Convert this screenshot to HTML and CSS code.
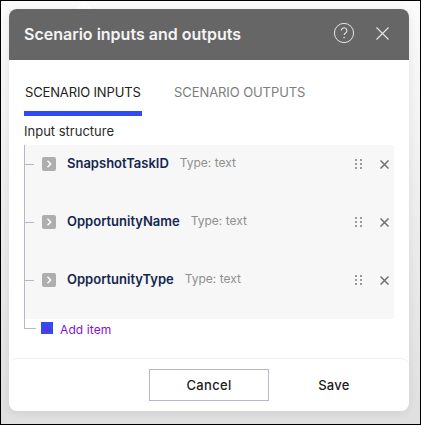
FILE: index.html
```html
<!DOCTYPE html>
<html lang="en">
<head>
<meta charset="utf-8">
<title>Scenario inputs and outputs</title>
<link rel="stylesheet" href="styles.css">
</head>
<body>
<div class="frame">
  <span class="notch"></span>
  <section class="modal">
    <header class="head">
      <h1 class="title">Scenario inputs and outputs</h1>
      <div class="head-icons">
        <svg class="help" viewBox="0 0 22 22" width="22" height="22"><circle cx="11" cy="11" r="9.6" fill="none" stroke="#e6e6e6" stroke-width="1"/><path d="M8.3 8.6a2.8 2.8 0 1 1 4.4 2.3c-1 .7-1.6 1.1-1.6 2.2" fill="none" stroke="#e6e6e6" stroke-width="1.1"/><circle cx="11.1" cy="15.6" r=".8" fill="#e6e6e6"/></svg>
        <svg class="close" viewBox="0 0 13 13" width="13" height="13"><path d="M.5.5l12 12M12.5.5l-12 12" stroke="#e6e6e6" stroke-width="1.1" fill="none"/></svg>
      </div>
    </header>
    <nav class="tabs">
      <span class="tab active">SCENARIO INPUTS</span>
      <span class="tab">SCENARIO OUTPUTS</span>
    </nav>
    <div class="label">Input structure</div>
    <div class="tree">
      <ul class="list">
        <li class="row">
          <svg class="chev" viewBox="0 0 14 14" width="14" height="14"><rect width="14" height="14" rx="2" fill="#aeaeae"/><path d="M5.5 3.8L8.7 7l-3.2 3.2" fill="none" stroke="#fff" stroke-width="1.4"/></svg>
          <span class="name">SnapshotTaskID</span><span class="type">Type: text</span>
          <span class="grip"><i></i><i></i><i></i><i></i><i></i><i></i></span>
          <svg class="del" viewBox="0 0 9 9" width="9" height="9"><path d="M.5.5l8 8M8.5.5l-8 8" stroke="#6f6f6f" stroke-width="1.5" fill="none"/></svg>
        </li>
        <li class="row">
          <svg class="chev" viewBox="0 0 14 14" width="14" height="14"><rect width="14" height="14" rx="2" fill="#aeaeae"/><path d="M5.5 3.8L8.7 7l-3.2 3.2" fill="none" stroke="#fff" stroke-width="1.4"/></svg>
          <span class="name">OpportunityName</span><span class="type">Type: text</span>
          <span class="grip"><i></i><i></i><i></i><i></i><i></i><i></i></span>
          <svg class="del" viewBox="0 0 9 9" width="9" height="9"><path d="M.5.5l8 8M8.5.5l-8 8" stroke="#6f6f6f" stroke-width="1.5" fill="none"/></svg>
        </li>
        <li class="row">
          <svg class="chev" viewBox="0 0 14 14" width="14" height="14"><rect width="14" height="14" rx="2" fill="#aeaeae"/><path d="M5.5 3.8L8.7 7l-3.2 3.2" fill="none" stroke="#fff" stroke-width="1.4"/></svg>
          <span class="name">OpportunityType</span><span class="type">Type: text</span>
          <span class="grip"><i></i><i></i><i></i><i></i><i></i><i></i></span>
          <svg class="del" viewBox="0 0 9 9" width="9" height="9"><path d="M.5.5l8 8M8.5.5l-8 8" stroke="#6f6f6f" stroke-width="1.5" fill="none"/></svg>
        </li>
      </ul>
      <div class="add">
        <svg class="plus" viewBox="0 0 12 12" width="12" height="12"><rect width="12" height="12" fill="#2d4cf5"/><path d="M6 3v9M1.5 8h9" stroke="#a010c0" stroke-width="1" fill="none"/></svg>
        <span>Add item</span>
      </div>
    </div>
    <footer class="foot">
      <button class="btn cancel">Cancel</button>
      <button class="btn save">Save</button>
    </footer>
  </section>
</div>
</body>
</html>
```
FILE: styles.css
```css
* { box-sizing: border-box; }
html, body { margin: 0; padding: 0; }
body { width: 421px; height: 425px; overflow: hidden; font-family: Inter, "Liberation Sans", sans-serif; }
.frame {
  position: relative;
  width: 421px; height: 425px;
  border: 1px solid #000;
  padding: 8px 10px 0 8px;
  background: linear-gradient(180deg, #fbfbfb 0%, #ececec 55%, #e0e0e0 100%);
}
.notch {
  position: absolute; left: 74px; top: 0;
  width: 0; height: 0;
  border-left: 9px solid transparent; border-right: 9px solid transparent;
  border-bottom: 8px solid #fff;
}
.modal {
  position: relative;
  width: 400px; height: 402px;
  background: #fff;
  border-radius: 8px;
  box-shadow: 0 2px 10px rgba(0,0,0,.08);
  display: flex; flex-direction: column;
}
.head {
  height: 51px; flex: none;
  background: #666;
  border-radius: 8px 8px 0 0;
  display: flex; align-items: center; justify-content: space-between;
  padding: 0 20px 0 15px;
}
.title { margin: 0; font-size: 16px; font-weight: 600; color: #f4f4f4; line-height: 50px; height: 51px; }
.head-icons { display: flex; align-items: center; gap: 21px; margin-top: -3px; }
.help, .close { display: block; }
.tabs { display: flex; gap: 32px; margin: 20px 0 0 15px; height: 36px; }
.tab { font-size: 13px; color: #7d7d7d; line-height: 20px; height: 36px; padding-top: 2px; white-space: nowrap; letter-spacing: -.08px; }
.tab.active { color: #222; border-bottom: 5px solid #2d4cf5; padding: 2px 1px 0; width: 118px; letter-spacing: -.15px; }
.label { font-size: 13px; color: #2a2a2a; line-height: 16px; margin: 7px 0 0 15px; height: 22px; }
.tree { margin-left: 15px; width: 370px; position: relative; }
.tree::before {
  content: ""; position: absolute; left: 0; top: 0;
  width: 11px; height: 183px;
  border-left: 1px solid #b9b5cf; border-bottom: 1px solid #b9b5cf;
}
.list { list-style: none; margin: 0; padding: 0 0 0 1px; background: #f7f7f7; height: 174px; }
.row { position: relative; height: 58px; display: flex; align-items: flex-start; padding: 12px 9px 0 17px; }
.row::before {
  content: ""; position: absolute; left: 0; top: 19px;
  width: 9px; height: 1px; background: #b9b5cf;
}
.chev { flex: none; margin-right: 11px; }
.name { font-size: 13px; font-weight: 600; color: #14264f; line-height: 14px; white-space: nowrap; margin: -1px 11px 0 0; }
.type { font-size: 12px; color: #8f8f8f; line-height: 14px; white-space: nowrap; margin-top: -1px; }
.grip { margin-left: auto; width: 8px; display: grid; grid-template-columns: 2px 2px; column-gap: 3px; row-gap: 2px; margin-top: 2px; margin-right: 17px; }
.grip i { width: 2px; height: 2px; background: #9a9a9a; display: block; }
.del { flex: none; margin-top: 3px; margin-right: -4px; }
.add { display: flex; align-items: center; gap: 7px; padding: 0 0 0 17px; height: 12px; margin-top: 3px; position: relative; }
.plus { display: block; flex: none; }
.add span { font-size: 12px; color: #8013d6; line-height: 14px; margin-top: 4px; letter-spacing: .1px; }
.foot {
  position: absolute; left: 0; right: 0; bottom: 0;
  height: 53px;
  border-top: 1px solid #f0f0f0; border-radius: 8px;
  display: flex; align-items: flex-start; padding: 10px 0 0 140px;
}
.btn { font-family: inherit; font-size: 13px; font-weight: 500; color: #1c1c1c; background: transparent; height: 32px; padding: 0; letter-spacing: .3px; }
.cancel { width: 120px; border: 1px solid #b9b5cf; }
.save { width: 130px; border: 0; }
```
